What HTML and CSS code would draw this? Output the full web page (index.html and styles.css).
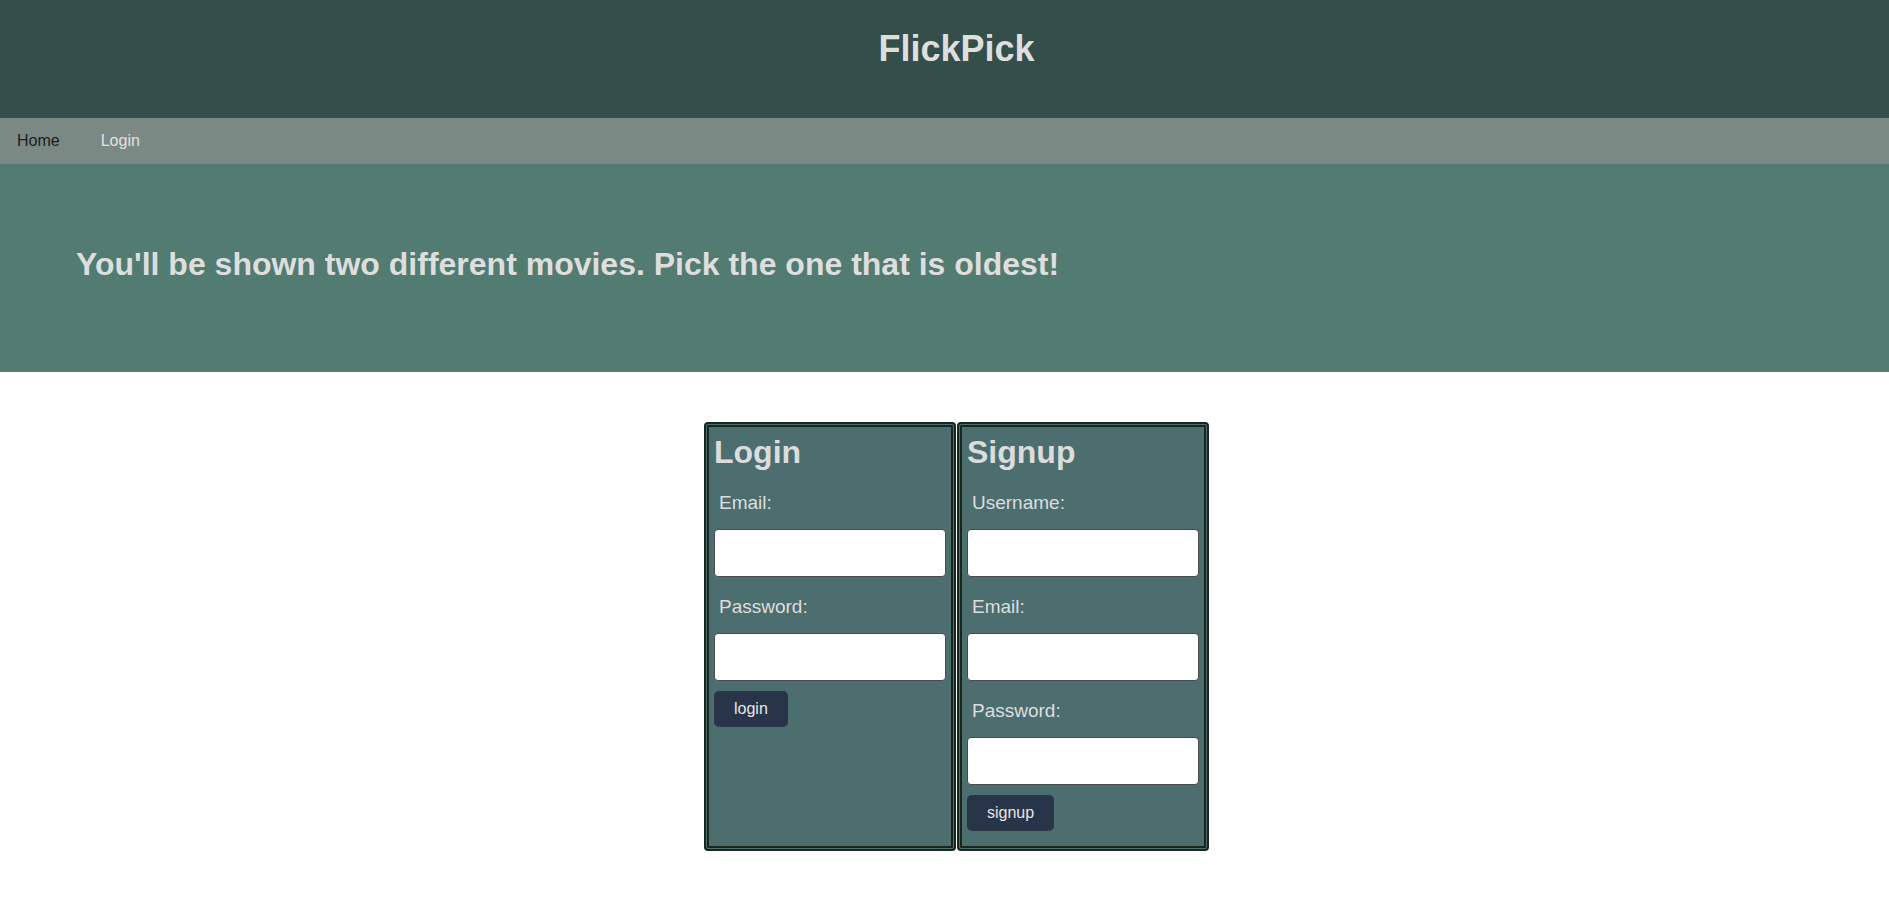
FILE: index.html
```html
<!DOCTYPE html>
<html lang="en">
<head>
<meta charset="utf-8">
<title>FlickPick</title>
<link rel="stylesheet" href="styles.css">
</head>
<body>
<header class="site-header">
  <h1 class="site-title">FlickPick</h1>
</header>
<nav class="site-nav">
  <a class="nav-link nav-link--dark" href="#">Home</a>
  <a class="nav-link" href="#">Login</a>
</nav>
<section class="hero">
  <h1 class="hero-text">You'll be shown two different movies. Pick the one that is oldest!</h1>
</section>
<main class="forms">
  <form class="card">
    <h1 class="card-title">Login</h1>
    <label class="field-label">Email:</label>
    <input class="field-input" type="text">
    <label class="field-label">Password:</label>
    <input class="field-input" type="password">
    <button class="btn" type="button">login</button>
  </form>
  <form class="card">
    <h1 class="card-title">Signup</h1>
    <label class="field-label">Username:</label>
    <input class="field-input" type="text">
    <label class="field-label">Email:</label>
    <input class="field-input" type="text">
    <label class="field-label">Password:</label>
    <input class="field-input" type="password">
    <button class="btn" type="button">signup</button>
  </form>
</main>
</body>
</html>
```

FILE: styles.css
```css
* { box-sizing: border-box; }

body {
  margin: 0;
  font-family: "Liberation Sans", Arial, sans-serif;
  background: #ffffff;
  color: #dddddd;
}

.site-header {
  height: 118px;
  background: #344f49;
  padding-top: 28px;
  padding-left: 24px;
  text-align: center;
}

.site-title {
  margin: 0;
  font-size: 36px;
  font-weight: bold;
  color: #dedede;
  line-height: 1.15;
}

.site-nav {
  height: 46px;
  background: #7b8985;
  display: flex;
  align-items: center;
  gap: 41px;
  padding-left: 17px;
}

.nav-link {
  font-size: 16px;
  text-decoration: none;
  color: #e2e2e2;
}

.nav-link--dark { color: #1c1c1c; }

.hero {
  background: #527c72;
  padding: 82px 76px 89px;
}

.hero-text {
  margin: 0;
  font-size: 32px;
  font-weight: bold;
  line-height: 37px;
  color: #dedede;
}

.forms {
  display: flex;
  justify-content: center;
  align-items: stretch;
  gap: 1px;
  margin-top: 50px;
  padding-left: 24px;
}

.card {
  width: 252px;
  margin: 0;
  background: #4d6e6f;
  border: 5px double #17271f;
  border-radius: 4px;
  padding: 7px 5px 15px;
}

.card-title {
  margin: 0 0 21px;
  font-size: 32px;
  font-weight: bold;
  line-height: 37px;
  color: #dcdcdc;
}

.field-label {
  display: block;
  margin: 19px 5px 16px;
  font-size: 19px;
  line-height: 21px;
  color: #dddddd;
}

.card-title + .field-label { margin-top: 0; }

.field-input {
  display: block;
  width: 100%;
  height: 48px;
  margin: 0;
  background: #ffffff;
  border: 1px solid #4a4a4a;
  border-radius: 4px;
}

.btn {
  display: block;
  height: 36px;
  margin-top: 10px;
  padding: 0 20px;
  background: #283548;
  color: #e6e6e6;
  border: none;
  border-radius: 5px;
  font-family: "Liberation Sans", Arial, sans-serif;
  font-size: 16px;
}
```
